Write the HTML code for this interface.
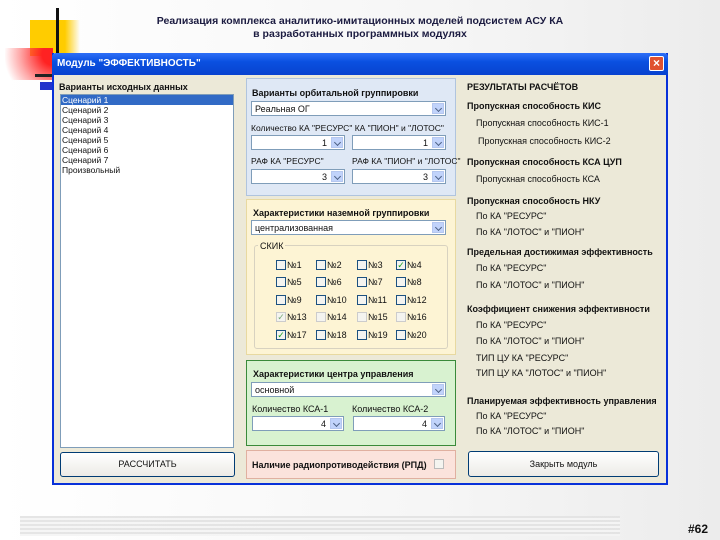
<!DOCTYPE html>
<html><head><meta charset="utf-8"><style>
*{margin:0;padding:0;box-sizing:border-box}
body{width:720px;height:540px;overflow:hidden;background:linear-gradient(90deg,#fff 0%,#f6f6f6 60%,#ececec 100%);font-family:"Liberation Sans","DejaVu Sans",sans-serif;position:relative;font-size:9px;color:#111}
.a{position:absolute}
.t{position:absolute;white-space:nowrap}
.b{font-weight:bold}
.cb{position:absolute;width:200px;height:15px;background:#fff;border:1px solid #7f9db9}
.dd{position:absolute;right:1px;top:1px;width:12px;height:11px;background:#c1d3fb;border:1px solid #b5c7ef}
.dd:after{content:"";position:absolute;left:3px;top:2px;width:4px;height:4px;border-right:1.5px solid #4d6185;border-bottom:1.5px solid #4d6185;transform:rotate(45deg)}
.ck{position:absolute;width:10px;height:10px;border:1px solid #1c5180;background:#f4f4f0}
.btn{position:absolute;background:linear-gradient(#fff,#ecebe6);border:1px solid #003c74;border-radius:3px;text-align:center}
</style></head><body>
<div class="a" style="left:30px;top:20px;width:50px;height:36px;background:linear-gradient(90deg,#ffcc00 70%,rgba(255,204,0,0))"></div>
<div class="a" style="left:5px;top:48px;width:48px;height:32px;background:radial-gradient(circle at 100% 20%,#f22 20%,rgba(255,80,80,.5) 60%,rgba(255,255,255,0) 90%)"></div>
<div class="a" style="left:56px;top:8px;width:3px;height:82px;background:#111"></div>
<div class="a" style="left:35px;top:74px;width:20px;height:3px;background:#222"></div>
<div class="a" style="left:40px;top:82px;width:14px;height:8px;background:#2233cc"></div>
<div class="t b" style="left:0;width:720px;top:15px;text-align:center;font-size:10.5px;line-height:13px;color:#1b1b40">Реализация комплекса аналитико-имитационных моделей подсистем АСУ КА<br>в разработанных программных модулях</div>

<div class="a" style="left:52px;top:53px;width:616px;height:432px;background:#ece9d8;border:2px solid #0831d9;border-top:none"></div>
<div class="a" style="left:52px;top:53px;width:616px;height:22px;background:linear-gradient(#2e6ff7,#0a50e0 40%,#0842cf);border-radius:4px 4px 0 0"></div>
<div class="t b" style="left:57px;top:58px;color:#fff;font-size:10px">Модуль "ЭФФЕКТИВНОСТЬ"</div>
<div class="a" style="left:649px;top:56px;width:15px;height:15px;background:#e0512f;border:1px solid #fff;border-radius:2px;color:#fff;font-size:12px;line-height:13px;text-align:center;font-weight:bold">×</div>

<div class="t b" style="left:59px;top:82px">Варианты исходных данных</div>
<div class="a" style="left:60px;top:94px;width:174px;height:354px;background:#fff;border:1px solid #7f9db9"></div>
<div class="a" style="left:61px;top:95px;width:172px;height:10px;background:#316ac5"></div>
<div class="t" style="left:62px;top:95px;line-height:10px;font-size:8.5px"><span style="color:#fff">Сценарий 1</span><br>Сценарий 2<br>Сценарий 3<br>Сценарий 4<br>Сценарий 5<br>Сценарий 6<br>Сценарий 7<br>Произвольный</div>
<div class="btn" style="left:60px;top:452px;width:175px;height:25px;line-height:23px">РАССЧИТАТЬ</div>

<div class="a" style="left:246px;top:78px;width:210px;height:118px;background:#dfe8f5;border:1px solid #b0c4de"></div>
<div class="t b" style="left:252px;top:88px">Варианты орбитальной группировки</div>
<div class="cb" style="left:251px;top:101px;width:195px"><span class="t" style="left:3px;top:2px">Реальная ОГ</span><div class="dd"></div></div>
<div class="t" style="left:251px;top:123px;font-size:8.5px">Количество КА "РЕСУРС"  КА "ПИОН" и "ЛОТОС"</div>
<div class="cb" style="left:251px;top:135px;width:94px"><span class="t" style="right:17px;top:2px">1</span><div class="dd"></div></div>
<div class="cb" style="left:352px;top:135px;width:94px"><span class="t" style="right:17px;top:2px">1</span><div class="dd"></div></div>
<div class="t" style="left:251px;top:156px;font-size:8.5px">РАФ КА "РЕСУРС"</div>
<div class="t" style="left:352px;top:156px;font-size:8.5px">РАФ КА "ПИОН" и "ЛОТОС"</div>
<div class="cb" style="left:251px;top:169px;width:94px"><span class="t" style="right:17px;top:2px">3</span><div class="dd"></div></div>
<div class="cb" style="left:352px;top:169px;width:94px"><span class="t" style="right:17px;top:2px">3</span><div class="dd"></div></div>

<div class="a" style="left:246px;top:199px;width:210px;height:156px;background:#fdf4d4;border:1px solid #e8d9a0"></div>
<div class="t b" style="left:253px;top:208px">Характеристики наземной группировки</div>
<div class="cb" style="left:251px;top:220px;width:195px"><span class="t" style="left:3px;top:2px">централизованная</span><div class="dd"></div></div>
<div class="a" style="left:254px;top:245px;width:194px;height:104px;border:1px solid #d8d2c0;border-radius:3px"></div>
<div class="t" style="left:258px;top:241px;background:#fdf4d4;padding:0 2px">СКИК</div>
<div class="ck" style="left:276px;top:260px"></div><div class="t" style="left:287px;top:260px">№1</div>
<div class="ck" style="left:316px;top:260px"></div><div class="t" style="left:327px;top:260px">№2</div>
<div class="ck" style="left:357px;top:260px"></div><div class="t" style="left:368px;top:260px">№3</div>
<div class="ck" style="left:396px;top:260px;color:#21a121;font-size:9px;line-height:8px;text-align:center">✓</div><div class="t" style="left:407px;top:260px">№4</div>
<div class="ck" style="left:276px;top:277px"></div><div class="t" style="left:287px;top:277px">№5</div>
<div class="ck" style="left:316px;top:277px"></div><div class="t" style="left:327px;top:277px">№6</div>
<div class="ck" style="left:357px;top:277px"></div><div class="t" style="left:368px;top:277px">№7</div>
<div class="ck" style="left:396px;top:277px"></div><div class="t" style="left:407px;top:277px">№8</div>
<div class="ck" style="left:276px;top:295px"></div><div class="t" style="left:287px;top:295px">№9</div>
<div class="ck" style="left:316px;top:295px"></div><div class="t" style="left:327px;top:295px">№10</div>
<div class="ck" style="left:357px;top:295px"></div><div class="t" style="left:368px;top:295px">№11</div>
<div class="ck" style="left:396px;top:295px"></div><div class="t" style="left:407px;top:295px">№12</div>
<div class="ck" style="left:276px;top:312px;border-color:#ccc;color:#7a7;font-size:9px;line-height:8px;text-align:center">✓</div><div class="t" style="left:287px;top:312px">№13</div>
<div class="ck" style="left:316px;top:312px;border-color:#ccc"></div><div class="t" style="left:327px;top:312px">№14</div>
<div class="ck" style="left:357px;top:312px;border-color:#ccc"></div><div class="t" style="left:368px;top:312px">№15</div>
<div class="ck" style="left:396px;top:312px;border-color:#ccc"></div><div class="t" style="left:407px;top:312px">№16</div>
<div class="ck" style="left:276px;top:330px;color:#21a121;font-size:9px;line-height:8px;text-align:center">✓</div><div class="t" style="left:287px;top:330px">№17</div>
<div class="ck" style="left:316px;top:330px"></div><div class="t" style="left:327px;top:330px">№18</div>
<div class="ck" style="left:357px;top:330px"></div><div class="t" style="left:368px;top:330px">№19</div>
<div class="ck" style="left:396px;top:330px"></div><div class="t" style="left:407px;top:330px">№20</div>

<div class="a" style="left:246px;top:360px;width:210px;height:86px;background:#d8f2d0;border:1px solid #3a8a3a"></div>
<div class="t b" style="left:253px;top:369px">Характеристики центра управления</div>
<div class="cb" style="left:251px;top:382px;width:195px"><span class="t" style="left:3px;top:2px">основной</span><div class="dd"></div></div>
<div class="t" style="left:252px;top:404px">Количество КСА-1</div>
<div class="t" style="left:352px;top:404px">Количество КСА-2</div>
<div class="cb" style="left:252px;top:416px;width:92px"><span class="t" style="right:17px;top:2px">4</span><div class="dd"></div></div>
<div class="cb" style="left:353px;top:416px;width:92px"><span class="t" style="right:17px;top:2px">4</span><div class="dd"></div></div>

<div class="a" style="left:246px;top:450px;width:210px;height:29px;background:#fbe3dc;border:1px solid #e0b0a0"></div>
<div class="t b" style="left:252px;top:460px">Наличие радиопротиводействия (РПД)</div>
<div class="ck" style="left:434px;top:459px;border-color:#bbb"></div>

<div class="t b" style="left:467px;top:82px">РЕЗУЛЬТАТЫ РАСЧЁТОВ</div>
<div class="t b" style="left:467px;top:101px">Пропускная способность КИС</div>
<div class="t" style="left:476px;top:118px">Пропускная способность КИС-1</div>
<div class="t" style="left:478px;top:136px">Пропускная способность КИС-2</div>
<div class="t b" style="left:467px;top:157px">Пропускная способность КСА ЦУП</div>
<div class="t" style="left:476px;top:174px">Пропускная способность КСА</div>
<div class="t b" style="left:467px;top:196px">Пропускная способность НКУ</div>
<div class="t" style="left:476px;top:211px">По КА "РЕСУРС"</div>
<div class="t" style="left:476px;top:227px">По КА "ЛОТОС" и "ПИОН"</div>
<div class="t b" style="left:467px;top:247px">Предельная достижимая эффективность</div>
<div class="t" style="left:476px;top:263px">По КА "РЕСУРС"</div>
<div class="t" style="left:476px;top:280px">По КА "ЛОТОС" и "ПИОН"</div>
<div class="t b" style="left:467px;top:304px">Коэффициент снижения эффективности</div>
<div class="t" style="left:476px;top:320px">По КА "РЕСУРС"</div>
<div class="t" style="left:476px;top:336px">По КА "ЛОТОС" и "ПИОН"</div>
<div class="t" style="left:476px;top:353px">ТИП ЦУ КА "РЕСУРС"</div>
<div class="t" style="left:476px;top:368px">ТИП ЦУ КА "ЛОТОС" и "ПИОН"</div>
<div class="t b" style="left:467px;top:396px">Планируемая эффективность управления</div>
<div class="t" style="left:476px;top:411px">По КА "РЕСУРС"</div>
<div class="t" style="left:476px;top:426px">По КА "ЛОТОС" и "ПИОН"</div>
<div class="btn" style="left:468px;top:451px;width:191px;height:26px;line-height:24px">Закрыть модуль</div>

<div class="a" style="left:20px;top:516px;width:600px;height:20px;background:repeating-linear-gradient(#e2e2e2 0 2px,#f4f4f4 2px 4px);opacity:.9"></div>
<div class="t b" style="left:688px;top:522px;font-size:12px">#62</div>
</body></html>
